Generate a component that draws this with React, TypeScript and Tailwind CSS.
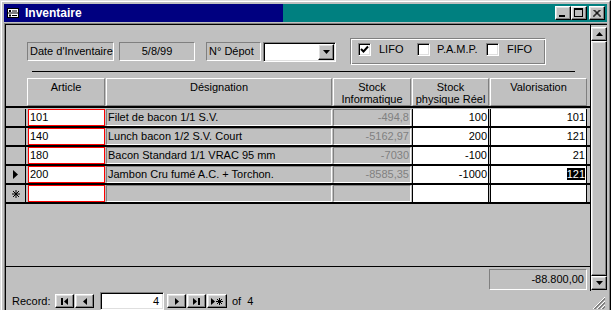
import React from "react";

const raised =
  "bg-[#c0c0c0] border border-t-white border-l-white border-r-black border-b-black shadow-[inset_-1px_-1px_0_#808080,inset_1px_1px_0_#dfdfdf]";
const sunken2 =
  "border border-t-[#808080] border-l-[#808080] border-r-white border-b-white shadow-[inset_1px_1px_0_#000,inset_-1px_-1px_0_#dfdfdf]";
const sunken1 = "border border-t-[#808080] border-l-[#808080] border-r-white border-b-white";
const headerCell =
  "h-[28px] bg-[#c0c0c0] border border-t-white border-l-white border-r-[#808080] border-b-[#808080] text-center leading-[12px] pt-[2px] whitespace-nowrap";

type Row = { a: string; d: string; si: string; sp: string; v: string; current?: boolean };

const rows: Row[] = [
  { a: "101", d: "Filet de bacon 1/1 S.V.", si: "-494,8", sp: "100", v: "101" },
  { a: "140", d: "Lunch bacon 1/2 S.V. Court", si: "-5162,97", sp: "200", v: "121" },
  { a: "180", d: "Bacon Standard 1/1 VRAC 95 mm", si: "-7030", sp: "-100", v: "21" },
  { a: "200", d: "Jambon Cru fumé A.C. + Torchon.", si: "-8585,35", sp: "-1000", v: "121", current: true },
];

function TitleIcon() {
  return (
    <svg width="12" height="10" viewBox="0 0 12 10" className="ml-[3px]">
      <rect x="0.5" y="0.5" width="11" height="9" fill="#fff" stroke="#000" />
      <line x1="0" y1="5" x2="12" y2="5" stroke="#000" />
      <rect x="2" y="2" width="2" height="2" fill="#000" />
      <rect x="2" y="6.5" width="2" height="2" fill="#000" />
      <line x1="5" y1="3" x2="10" y2="3" stroke="#000" />
      <line x1="5" y1="7.5" x2="10" y2="7.5" stroke="#000" />
    </svg>
  );
}

function Triangle({ dir, w = 4, h = 7 }: { dir: "l" | "r" | "u" | "d"; w?: number; h?: number }) {
  let pts = "";
  if (dir === "r") pts = `0,0 ${w},${h / 2} 0,${h}`;
  if (dir === "l") pts = `${w},0 0,${h / 2} ${w},${h}`;
  if (dir === "u") pts = `0,${h} ${w / 2},0 ${w},${h}`;
  if (dir === "d") pts = `0,0 ${w / 2},${h} ${w},0`;
  return (
    <svg width={w} height={h} viewBox={`0 0 ${w} ${h}`}>
      <polygon points={pts} fill="#000" />
    </svg>
  );
}

function Star({ size = 8 }: { size?: number }) {
  const s = size;
  return (
    <svg width={s + 1} height={s + 1} viewBox={`0 0 ${s + 1} ${s + 1}`}>
      <g stroke="#000" strokeWidth="1">
        <line x1={s / 2 + 0.5} y1="0" x2={s / 2 + 0.5} y2={s + 1} />
        <line x1="0" y1={s / 2 + 0.5} x2={s + 1} y2={s / 2 + 0.5} />
        <line x1="1" y1="1" x2={s} y2={s} />
        <line x1={s} y1="1" x2="1" y2={s} />
      </g>
    </svg>
  );
}

function Checkbox({ checked }: { checked?: boolean }) {
  return (
    <div className={`w-[13px] h-[13px] bg-white ${sunken2} flex items-center justify-center`}>
      {checked && (
        <svg width="9" height="9" viewBox="0 0 9 9">
          <path d="M1 4 L3.5 6.5 L8 1.5" stroke="#000" strokeWidth="2" fill="none" />
        </svg>
      )}
    </div>
  );
}

function NavBtn({ children, w = 19 }: { children: React.ReactNode; w?: number }) {
  return (
    <div className={`${raised} h-[14px] flex items-center justify-center gap-[1px]`} style={{ width: w }}>
      {children}
    </div>
  );
}

export default function App() {
  return (
    <div className="w-[611px] h-[310px] overflow-hidden bg-[#c0c0c0] font-['Liberation_Sans',Arial,sans-serif] text-[11px] text-black">
      <div className="w-[611px] h-[318px] border border-t-[#dfdfdf] border-l-[#dfdfdf] border-r-black border-b-black">
        <div className="h-full border border-t-white border-l-white border-r-[#808080] border-b-[#808080] p-[2px] flex flex-col">
          {/* Title bar */}
          <div className="h-[18px] flex items-center bg-[linear-gradient(to_right,#000080_279px,#008080_279px)] pr-[2px]">
            <TitleIcon />
            <span className="ml-[6px] text-white font-bold text-[12px] leading-[14px]">Inventaire</span>
            <div className="ml-auto flex items-center">
              <div className={`${raised} w-[16px] h-[14px] relative`}>
                <div className="absolute left-[3px] top-[8px] w-[6px] h-[2px] bg-black" />
              </div>
              <div className={`${raised} w-[16px] h-[14px] relative`}>
                <div className="absolute left-[2px] top-[1px] w-[9px] h-[9px] border border-black border-t-2" />
              </div>
              <div className={`${raised} w-[16px] h-[14px] ml-[2px] flex items-center justify-center`}>
                <svg width="8" height="7" viewBox="0 0 8 7">
                  <path d="M0.5 0 L7.5 7 M1.5 0 L8 6.5 M7.5 0 L0.5 7 M6.5 0 L0 6.5" stroke="#000" strokeWidth="1" />
                </svg>
              </div>
            </div>
          </div>

          {/* Client area */}
          <div className="mt-[1px] flex-1 border-t border-l border-[#808080]">
            <div className="h-full border-t border-l border-black flex flex-col">
              <div className="h-[266px] flex">
                {/* Form */}
                <div className="w-[584px] h-full flex flex-col">
                  {/* Header controls */}
                  <div className="mt-[13px] h-[27px] flex items-center pl-[21px] whitespace-nowrap">
                    <div className={`w-[87px] h-[19px] ${sunken1} pl-[2px] leading-[17px] overflow-hidden`}>Date d'Inventaire</div>
                    <div className={`ml-[5px] w-[76px] h-[19px] ${sunken1} text-center leading-[17px]`}>5/8/99</div>
                    <div className={`ml-[11px] w-[55px] h-[19px] ${sunken1} pl-[2px] leading-[17px]`}>N° Dépot</div>
                    <div className={`ml-[2px] w-[73px] h-[20px] bg-white ${sunken2} flex justify-end p-[1px]`}>
                      <div className={`${raised} w-[16px] h-full flex items-center justify-center`}>
                        <Triangle dir="d" w={7} h={4} />
                      </div>
                    </div>
                    <div className="ml-[14px] w-[196px] h-[27px] border border-t-[#808080] border-l-[#808080] border-r-white border-b-white shadow-[inset_1px_1px_0_#fff,inset_-1px_-1px_0_#808080] flex items-start pt-[4px] pl-[7px]">
                      <div className="w-[59px] flex items-center">
                        <Checkbox checked />
                        <span className="ml-[8px] leading-[13px]">LIFO</span>
                      </div>
                      <div className="w-[69px] flex items-center">
                        <Checkbox />
                        <span className="ml-[7px] leading-[13px]">P.A.M.P.</span>
                      </div>
                      <div className="flex items-center">
                        <Checkbox />
                        <span className="ml-[8px] leading-[13px]">FIFO</span>
                      </div>
                    </div>
                  </div>

                  {/* Separator */}
                  <div className="mt-[6px] ml-[26px] w-[543px] h-[1px] bg-black" />

                  {/* Grid header */}
                  <div className="mt-[6px] h-[30px] border-b-2 border-black flex pl-[21px]">
                    <div className={`${headerCell} w-[78px]`}>Article</div>
                    <div className={`${headerCell} ml-[1px] w-[226px]`}>Désignation</div>
                    <div className={`${headerCell} ml-[1px] w-[78px]`}>
                      Stock
                      <br />
                      Informatique
                    </div>
                    <div className={`${headerCell} ml-[1px] w-[77px]`}>
                      Stock
                      <br />
                      physique Réel
                    </div>
                    <div className={`${headerCell} ml-[1px] w-[97px]`}>Valorisation</div>
                  </div>

                  {/* Rows */}
                  <div className="pt-[1px]">
                    {[...rows, null].map((r, i) => (
                      <div key={i} className="h-[19px] border-b-2 border-black flex whitespace-nowrap">
                        <div className="w-[20px] h-[17px] border-r border-black flex items-center justify-center">
                          {r?.current && <Triangle dir="r" w={5} h={9} />}
                          {!r && <Star size={7} />}
                        </div>
                        <div className="ml-[2px] w-[77px] h-[17px] bg-white border border-[#ff0000] pl-[1px] leading-[15px]">
                          {r?.a}
                        </div>
                        <div className={`ml-[1px] w-[226px] h-[17px] ${sunken1} pl-[1px] leading-[15px] overflow-hidden`}>
                          {r?.d}
                        </div>
                        <div className={`ml-[1px] w-[78px] h-[17px] ${sunken1} pr-[1px] text-right text-[#808080] leading-[15px]`}>
                          {r?.si}
                        </div>
                        <div className="ml-[1px] w-[77px] h-[17px] bg-white border-x border-black pr-[1px] text-right leading-[17px]">
                          {r?.sp}
                        </div>
                        <div className="ml-[1px] w-[97px] h-[17px] bg-white border-x border-black pr-[1px] text-right leading-[17px]">
                          {r &&
                            (r.current ? (
                              <span className="bg-black text-white leading-[12px] inline-block">{r.v}</span>
                            ) : (
                              r.v
                            ))}
                        </div>
                      </div>
                    ))}
                  </div>

                  <div className="flex-1" />

                  {/* Footer */}
                  <div className="h-[1px] bg-black" />
                  <div className="mt-[2px] h-[21px] flex justify-end pr-[3px]">
                    <div className={`w-[98px] h-[21px] ${sunken1} text-right pr-[2px] leading-[19px]`}>-88.800,00</div>
                  </div>
                  <div className="h-[1px]" />
                </div>

                {/* Vertical scrollbar */}
                <div className="w-[17px] h-full border-l border-black flex flex-col pt-[2px] pb-[1px]">
                  <div className={`${raised} h-[14px] flex items-center justify-center`}>
                    <Triangle dir="u" w={7} h={4} />
                  </div>
                  <div className={`${raised} flex-1`} />
                  <div className={`${raised} h-[14px] flex items-center justify-center`}>
                    <Triangle dir="d" w={7} h={4} />
                  </div>
                </div>
              </div>

              {/* Record navigation */}
              <div className="h-[20px] flex items-center pl-[6px] whitespace-nowrap">
                <span className="w-[43px] leading-[13px]">Record:</span>
                <NavBtn>
                  <div className="w-[2px] h-[7px] bg-black" />
                  <Triangle dir="l" w={4} h={7} />
                </NavBtn>
                <div className="ml-[1px]">
                  <NavBtn>
                    <Triangle dir="l" w={4} h={7} />
                  </NavBtn>
                </div>
                <div className={`ml-[6px] w-[64px] h-[18px] bg-white ${sunken2} text-right pr-[4px] leading-[16px]`}>4</div>
                <div className="ml-[3px]">
                  <NavBtn>
                    <Triangle dir="r" w={4} h={7} />
                  </NavBtn>
                </div>
                <div className="ml-[1px]">
                  <NavBtn>
                    <Triangle dir="r" w={4} h={7} />
                    <div className="w-[2px] h-[7px] bg-black" />
                  </NavBtn>
                </div>
                <div className="ml-[1px]">
                  <NavBtn w={20}>
                    <Triangle dir="r" w={4} h={7} />
                    <Star size={6} />
                  </NavBtn>
                </div>
                <span className="ml-[5px] leading-[13px]">of</span>
                <span className="ml-[6px] leading-[13px]">4</span>
                <div className="ml-auto self-end mb-[1px] mr-[1px]">
                  <svg width="14" height="14" viewBox="0 0 14 14">
                    <g strokeWidth="1">
                      <line x1="13" y1="1" x2="1" y2="13" stroke="#fff" />
                      <line x1="13" y1="2" x2="2" y2="13" stroke="#808080" />
                      <line x1="13" y1="3" x2="3" y2="13" stroke="#808080" />
                      <line x1="13" y1="5" x2="5" y2="13" stroke="#fff" />
                      <line x1="13" y1="6" x2="6" y2="13" stroke="#808080" />
                      <line x1="13" y1="7" x2="7" y2="13" stroke="#808080" />
                      <line x1="13" y1="9" x2="9" y2="13" stroke="#fff" />
                      <line x1="13" y1="10" x2="10" y2="13" stroke="#808080" />
                      <line x1="13" y1="11" x2="11" y2="13" stroke="#808080" />
                    </g>
                  </svg>
                </div>
              </div>
            </div>
          </div>
        </div>
      </div>
    </div>
  );
}
